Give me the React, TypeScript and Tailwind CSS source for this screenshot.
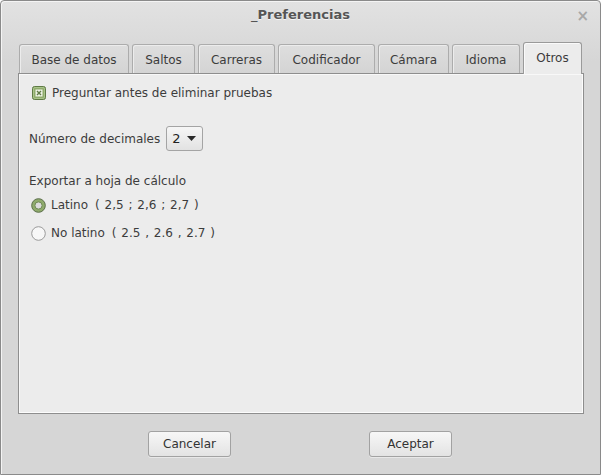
import React from "react";

const font = { fontFamily: '"DejaVu Sans", "Liberation Sans", sans-serif' };

const tabs = [
  { label: "Base de datos", w: "w-[110px]" },
  { label: "Saltos", w: "w-[63px]" },
  { label: "Carreras", w: "w-[77px]" },
  { label: "Codificador", w: "w-[97px]" },
  { label: "Cámara", w: "w-[71px]" },
  { label: "Idioma", w: "w-[68px]" },
];

function CheckBox() {
  return (
    <svg width="14" height="14" viewBox="0 0 14 14" className="shrink-0">
      <rect x="0.5" y="0.5" width="13" height="13" rx="2" fill="#8fab6c" stroke="#5f7a45" />
      <rect x="1.5" y="1.5" width="11" height="11" rx="1.5" fill="none" stroke="#a9c48a" />
      <rect x="3.5" y="3.5" width="7" height="7" fill="#eef3e6" stroke="none" />
      <path d="M5 5 L9 9 M9 5 L5 9" stroke="#5f7a45" strokeWidth="1.4" />
    </svg>
  );
}

function Radio({ on }: { on?: boolean }) {
  return on ? (
    <svg width="15" height="15" viewBox="0 0 15 15" className="shrink-0">
      <circle cx="7.5" cy="7.5" r="6.8" fill="#8fab6c" stroke="#5a6e48" />
      <circle cx="7.5" cy="7.5" r="3.6" fill="#dcdcdc" stroke="#6f8a55" />
    </svg>
  ) : (
    <svg width="15" height="15" viewBox="0 0 15 15" className="shrink-0">
      <circle cx="7.5" cy="7.5" r="6.8" fill="#f7f7f7" stroke="#9a9a9a" />
    </svg>
  );
}

export default function App() {
  return (
    <div className="w-[601px] h-[475px] text-[12px] text-[#3c3c3c]" style={font}>
      <div className="flex h-full flex-col rounded-t-[4px] border border-[#8a8a8a] bg-[linear-gradient(#e2e2e2,#d6d6d6_60px)] shadow-[inset_1px_1px_0_#f4f4f4]">
        {/* title bar */}
        <div className="relative flex h-[27px] items-center justify-center">
          <span className="text-[13px] font-bold text-[#555] [text-shadow:0_1px_0_#f4f4f4]">
            _Preferencias
          </span>
          <span className="absolute right-[11px] top-[4px] text-[15px] font-bold text-[#a8a8a8]">×</span>
        </div>

        {/* notebook */}
        <div className="ml-[17px] mt-[14px] w-[566px]">
          <div className="flex items-end gap-[3px] pl-px">
            {tabs.map((t) => (
              <div
                key={t.label}
                className={`${t.w} flex h-[29px] items-center justify-center rounded-t-[3px] border border-b-0 border-[#acacac] bg-[linear-gradient(#dedede,#d4d4d4)] pt-[2px] shadow-[inset_1px_1px_0_#ececec]`}
              >
                {t.label}
              </div>
            ))}
            <div className="relative z-10 -mb-px flex h-[32px] w-[59px] items-start justify-center rounded-t-[3px] border border-b-0 border-[#9a9a9a] bg-[#ececec] pt-[6px] shadow-[inset_1px_1px_0_#fafafa]">
              Otros
            </div>
          </div>

          <div className="h-[341px] border border-[#8e8e8e] bg-[#ececec] shadow-[inset_-1px_-1px_0_#fcfcfc,inset_1px_1px_0_#f8f8f8] pl-[10px] pt-[9px]">
            <div className="flex h-[20px] items-center gap-[6px] pl-[3px]">
              <CheckBox />
              <span>Preguntar antes de eliminar pruebas</span>
            </div>

            <div className="mt-[23px] flex items-center gap-[6px]">
              <span>Número de decimales</span>
              <div className="flex h-[25px] w-[37px] items-center justify-between rounded-[3px] border border-[#a4a4a4] bg-[linear-gradient(#f6f6f6,#e2e2e2)] pl-[5px] pr-[6px] text-[13px] text-[#222]">
                <span>2</span>
                <svg width="9" height="5" viewBox="0 0 9 5">
                  <path d="M0 0 H9 L4.5 5 Z" fill="#2a2a2a" />
                </svg>
              </div>
            </div>

            <div className="mt-[21px] flex h-[18px] items-center">Exportar a hoja de cálculo</div>

            <div className="mt-[5px] flex h-[20px] items-center gap-[5px] pl-[2px]">
              <Radio on />
              <span>Latino</span>
              <span className="ml-[2px] [word-spacing:1px]">( 2,5 ; 2,6 ; 2,7 )</span>
            </div>
            <div className="mt-[8px] flex h-[20px] items-center gap-[5px] pl-[2px]">
              <Radio />
              <span>No latino</span>
              <span className="ml-[2px] [word-spacing:1px]">( 2.5 , 2.6 , 2.7 )</span>
            </div>
          </div>
        </div>

        {/* buttons */}
        <div className="mt-[17px] flex pl-[147px]">
          <button className="h-[26px] w-[83px] rounded-[3px] border border-[#a2a2a2] bg-[linear-gradient(#f7f7f7,#e3e3e3)] text-[#333] shadow-[0_1px_0_#e8e8e8]">
            Cancelar
          </button>
          <button className="ml-[138px] h-[26px] w-[83px] rounded-[3px] border border-[#a2a2a2] bg-[linear-gradient(#f7f7f7,#e3e3e3)] text-[#333] shadow-[0_1px_0_#e8e8e8]">
            Aceptar
          </button>
        </div>
      </div>
    </div>
  );
}
